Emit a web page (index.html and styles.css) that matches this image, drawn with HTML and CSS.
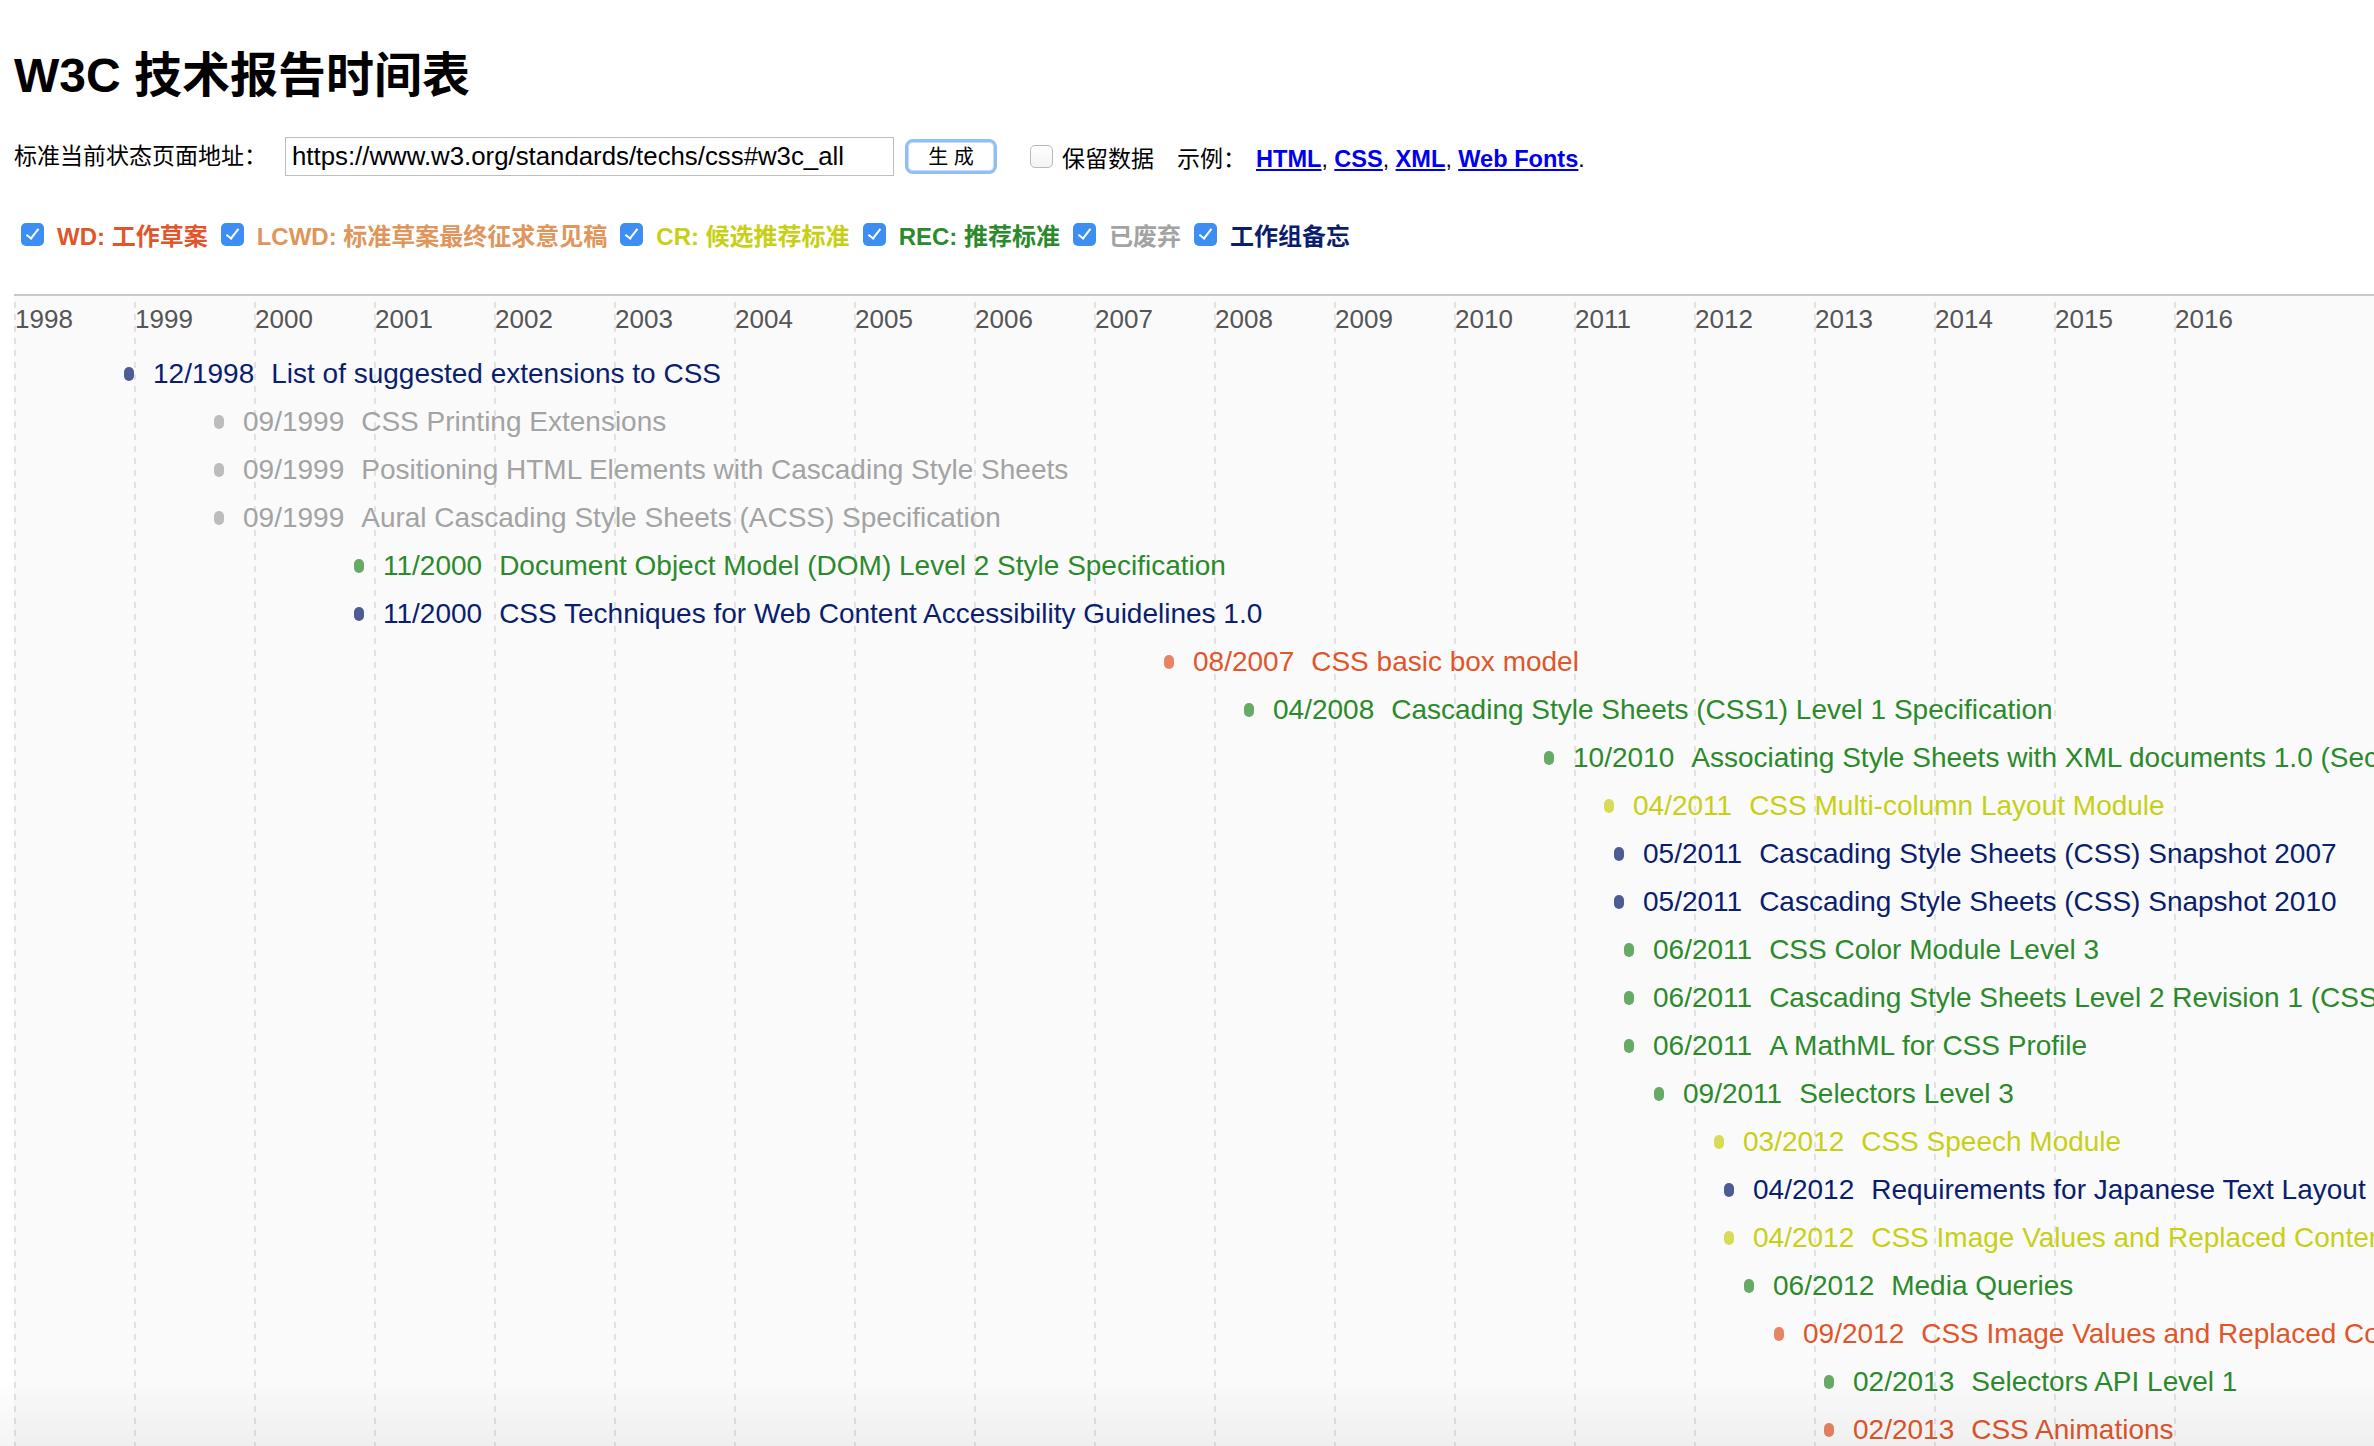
FILE: index.html
```html
<!DOCTYPE html>
<html lang="zh-CN">
<head>
<meta charset="utf-8">
<title>W3C 技术报告时间表</title>
<link rel="stylesheet" href="styles.css">
</head>
<body>
<h1 class="title">W3C 技术报告时间表</h1>

<form class="form-row" onsubmit="return false">
  <label class="url-label" for="url">标准当前状态页面地址：</label>
  <input id="url" class="url-input" type="text" value="https://www.w3.org/standards/techs/css#w3c_all">
  <button class="gen-btn" type="button">生 成</button>
  <label class="keep"><input type="checkbox" class="cb">保留数据</label>
  <span class="examples"><span class="ex-prefix">示例：</span><a href="#">HTML</a>, <a href="#">CSS</a>, <a href="#">XML</a>, <a href="#">Web Fonts</a>.</span>
</form>

<div class="filters">
  <label class="filter c-wd"><input type="checkbox" class="cb" checked>WD: 工作草案</label>
  <label class="filter c-lcwd"><input type="checkbox" class="cb" checked>LCWD: 标准草案最终征求意见稿</label>
  <label class="filter c-cr"><input type="checkbox" class="cb" checked>CR: 候选推荐标准</label>
  <label class="filter c-rec"><input type="checkbox" class="cb" checked>REC: 推荐标准</label>
  <label class="filter c-ret"><input type="checkbox" class="cb" checked>已废弃</label>
  <label class="filter c-note"><input type="checkbox" class="cb" checked>工作组备忘</label>
</div>

<div class="timeline">
  <div class="years">
    <span class="year">1998</span><span class="year">1999</span><span class="year">2000</span><span class="year">2001</span><span class="year">2002</span><span class="year">2003</span><span class="year">2004</span><span class="year">2005</span><span class="year">2006</span><span class="year">2007</span><span class="year">2008</span><span class="year">2009</span><span class="year">2010</span><span class="year">2011</span><span class="year">2012</span><span class="year">2013</span><span class="year">2014</span><span class="year">2015</span><span class="year">2016</span>
  </div>
  <ul class="entries">
    <li class="entry c-note" style="padding-left:110px"><span class="dot"></span><span class="date">12/1998</span><span class="name">List of suggested extensions to CSS</span></li>
    <li class="entry c-ret" style="padding-left:200px"><span class="dot"></span><span class="date">09/1999</span><span class="name">CSS Printing Extensions</span></li>
    <li class="entry c-ret" style="padding-left:200px"><span class="dot"></span><span class="date">09/1999</span><span class="name">Positioning HTML Elements with Cascading Style Sheets</span></li>
    <li class="entry c-ret" style="padding-left:200px"><span class="dot"></span><span class="date">09/1999</span><span class="name">Aural Cascading Style Sheets (ACSS) Specification</span></li>
    <li class="entry c-rec" style="padding-left:340px"><span class="dot"></span><span class="date">11/2000</span><span class="name">Document Object Model (DOM) Level 2 Style Specification</span></li>
    <li class="entry c-note" style="padding-left:340px"><span class="dot"></span><span class="date">11/2000</span><span class="name">CSS Techniques for Web Content Accessibility Guidelines 1.0</span></li>
    <li class="entry c-wd" style="padding-left:1150px"><span class="dot"></span><span class="date">08/2007</span><span class="name">CSS basic box model</span></li>
    <li class="entry c-rec" style="padding-left:1230px"><span class="dot"></span><span class="date">04/2008</span><span class="name">Cascading Style Sheets (CSS1) Level 1 Specification</span></li>
    <li class="entry c-rec" style="padding-left:1530px"><span class="dot"></span><span class="date">10/2010</span><span class="name">Associating Style Sheets with XML documents 1.0 (Second Edition)</span></li>
    <li class="entry c-cr" style="padding-left:1590px"><span class="dot"></span><span class="date">04/2011</span><span class="name">CSS Multi-column Layout Module</span></li>
    <li class="entry c-note" style="padding-left:1600px"><span class="dot"></span><span class="date">05/2011</span><span class="name">Cascading Style Sheets (CSS) Snapshot 2007</span></li>
    <li class="entry c-note" style="padding-left:1600px"><span class="dot"></span><span class="date">05/2011</span><span class="name">Cascading Style Sheets (CSS) Snapshot 2010</span></li>
    <li class="entry c-rec" style="padding-left:1610px"><span class="dot"></span><span class="date">06/2011</span><span class="name">CSS Color Module Level 3</span></li>
    <li class="entry c-rec" style="padding-left:1610px"><span class="dot"></span><span class="date">06/2011</span><span class="name">Cascading Style Sheets Level 2 Revision 1 (CSS 2.1) Specification</span></li>
    <li class="entry c-rec" style="padding-left:1610px"><span class="dot"></span><span class="date">06/2011</span><span class="name">A MathML for CSS Profile</span></li>
    <li class="entry c-rec" style="padding-left:1640px"><span class="dot"></span><span class="date">09/2011</span><span class="name">Selectors Level 3</span></li>
    <li class="entry c-cr" style="padding-left:1700px"><span class="dot"></span><span class="date">03/2012</span><span class="name">CSS Speech Module</span></li>
    <li class="entry c-note" style="padding-left:1710px"><span class="dot"></span><span class="date">04/2012</span><span class="name">Requirements for Japanese Text Layout</span></li>
    <li class="entry c-cr" style="padding-left:1710px"><span class="dot"></span><span class="date">04/2012</span><span class="name">CSS Image Values and Replaced Content Module Level 3</span></li>
    <li class="entry c-rec" style="padding-left:1730px"><span class="dot"></span><span class="date">06/2012</span><span class="name">Media Queries</span></li>
    <li class="entry c-wd" style="padding-left:1760px"><span class="dot"></span><span class="date">09/2012</span><span class="name">CSS Image Values and Replaced Content Module Level 4</span></li>
    <li class="entry c-rec" style="padding-left:1810px"><span class="dot"></span><span class="date">02/2013</span><span class="name">Selectors API Level 1</span></li>
    <li class="entry c-wd" style="padding-left:1810px"><span class="dot"></span><span class="date">02/2013</span><span class="name">CSS Animations</span></li>
    <li class="entry c-rec" style="padding-left:1820px"><span class="dot"></span><span class="date">03/2013</span><span class="name">CSS Style Attributes</span></li>
  </ul>
</div>
</body>
</html>
```

FILE: styles.css
```css
html, body {
  margin: 0;
  padding: 0;
  background: #fff;
  overflow: hidden;
}

body {
  padding-left: 14px;
  font-family: "Liberation Sans", "Noto Sans CJK SC", sans-serif;
  color: #000;
}

body::after {
  content: "";
  position: fixed;
  left: 0;
  right: 0;
  bottom: 0;
  height: 66px;
  background: linear-gradient(to bottom, rgba(0, 0, 0, 0), rgba(0, 0, 0, 0.045));
  pointer-events: none;
}

/* colour categories */
.c-wd { color: #e0562a; }
.c-lcwd { color: #e0965a; }
.c-cr { color: #c8d016; }
.c-rec { color: #2b8a2b; }
.c-ret { color: #a3a3a3; }
.c-note { color: #0b1e6e; }

.title {
  margin: 48px 0 0;
  font-size: 48px;
  line-height: 56px;
  font-weight: bold;
}

/* url form row */
.form-row {
  margin: 33px 0 0;
  height: 39px;
  display: flex;
  align-items: center;
  font-size: 23px;
  white-space: nowrap;
}

.url-label {
  line-height: 39px;
}

.url-input {
  box-sizing: border-box;
  margin: 0 0 0 18px;
  width: 609px;
  height: 39px;
  padding: 0 6px;
  border: 1px solid #bdbdbd;
  border-radius: 0;
  background: #fff;
  font-family: "Liberation Sans", sans-serif;
  font-size: 25.8px;
  color: #000;
  outline: none;
}

.gen-btn {
  box-sizing: border-box;
  margin: 0 0 0 11px;
  width: 92px;
  height: 35px;
  padding: 0;
  border: 3px solid #93bef3;
  border-radius: 8px;
  box-shadow: inset 0 0 0 1px #c5dbf7;
  background: #fff;
  font-family: "Liberation Sans", "Noto Sans CJK SC", sans-serif;
  font-size: 20px;
  line-height: 1;
  color: #000;
}

.keep {
  display: flex;
  align-items: center;
  margin-left: 33px;
}

.keep .cb {
  margin: 0 9px 0 0;
}

.examples {
  margin-left: 23px;
}

.ex-prefix {
  margin-right: 10px;
}

.examples a {
  color: #0000ee;
  font-weight: bold;
  font-size: 23.6px;
  text-decoration: underline;
}

/* checkbox */
.cb {
  -webkit-appearance: none;
  appearance: none;
  position: relative;
  box-sizing: border-box;
  flex: none;
  width: 23px;
  height: 23px;
  margin: 0;
  border: 1px solid #b9b9b9;
  border-radius: 5px;
  background: linear-gradient(#ffffff, #f3f3f3);
}

.cb:checked {
  border: none;
  background: #3d8ef3;
}

.cb:checked::after {
  content: "";
  position: absolute;
  left: 8px;
  top: 3px;
  width: 5px;
  height: 11px;
  border: solid #fff;
  border-width: 0 2px 2px 0;
  transform: rotate(38deg);
}

/* filter row */
.filters {
  margin: 43px 0 0;
  height: 30px;
  display: flex;
  align-items: center;
  padding-left: 7px;
  font-size: 24px;
  font-weight: bold;
  white-space: nowrap;
}

.filter {
  display: flex;
  align-items: center;
  margin-right: 13px;
}

.filter .cb {
  margin-right: 13px;
}

/* timeline */
.timeline {
  margin-top: 45px;
  border-top: 2px solid #c9c9c9;
  background-color: #fafafa;
  background-image:
    linear-gradient(to bottom, #fafafa 6px, rgba(250, 250, 250, 0) 6px),
    repeating-linear-gradient(to right, #e2e2e2 0, #e2e2e2 2px, rgba(226, 226, 226, 0) 2px, rgba(226, 226, 226, 0) 120px);
  background-size: 100% 12px, 2280px 100%;
  background-repeat: repeat, no-repeat;
  min-height: 1200px;
  overflow: hidden;
}

.years {
  display: flex;
  height: 46px;
  white-space: nowrap;
}

.year {
  flex: 0 0 120px;
  box-sizing: border-box;
  padding-left: 1px;
  font-size: 26px;
  line-height: 46px;
  color: #555;
}

.entries {
  list-style: none;
  margin: 8px 0 0;
  padding: 0;
}

.entry {
  display: flex;
  align-items: center;
  height: 48px;
  font-size: 28px;
  line-height: 48px;
  white-space: nowrap;
}

.dot {
  flex: none;
  width: 10px;
  height: 14px;
  border-radius: 5px;
  background: currentColor;
  opacity: 0.72;
  margin-right: 19px;
}

.date {
  margin-right: 17px;
}
```
